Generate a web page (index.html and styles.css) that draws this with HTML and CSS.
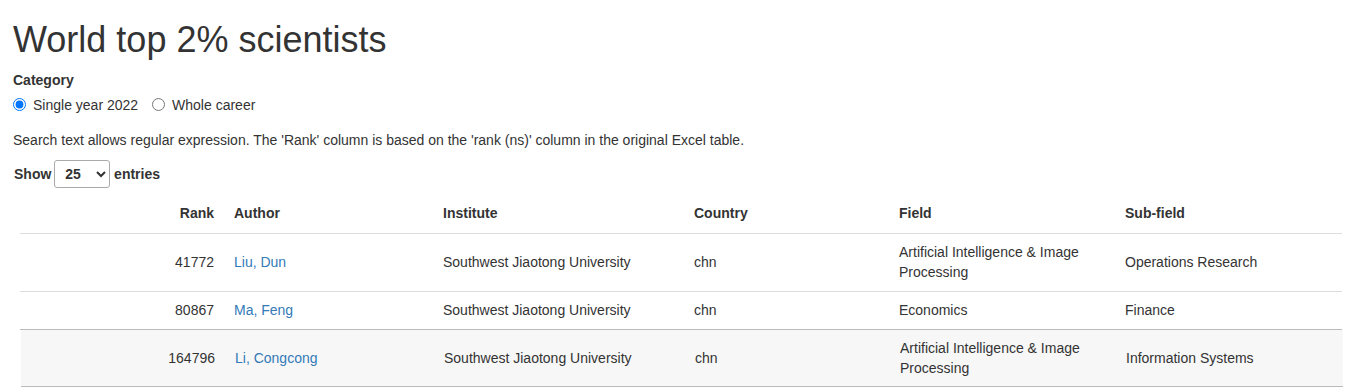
FILE: index.html
```html
<!DOCTYPE html>
<html lang="en">
<head>
<meta charset="utf-8">
<title>World top 2% scientists</title>
<link rel="stylesheet" href="styles.css">
</head>
<body>
<div class="page">
  <h1 class="title">World top 2% scientists</h1>
  <label class="group-label">Category</label>
  <div class="radios">
    <label class="radio"><input type="radio" name="cat" checked><span>Single year 2022</span></label>
    <label class="radio"><input type="radio" name="cat"><span>Whole career</span></label>
  </div>
  <p class="note">Search text allows regular expression. The 'Rank' column is based on the 'rank (ns)' column in the original Excel table.</p>
  <div class="length">
    <label class="length-label">Show
      <select class="length-select">
        <option>10</option>
        <option selected>25</option>
        <option>50</option>
        <option>100</option>
      </select>
      entries</label>
  </div>
  <div class="table-wrap">
    <table class="data">
      <colgroup>
        <col class="c-rank"><col class="c-author"><col class="c-inst"><col class="c-country"><col class="c-field"><col class="c-sub">
      </colgroup>
      <thead>
        <tr>
          <th class="num">Rank</th>
          <th>Author</th>
          <th>Institute</th>
          <th>Country</th>
          <th>Field</th>
          <th>Sub-field</th>
        </tr>
      </thead>
      <tbody>
        <tr>
          <td class="num">41772</td>
          <td><a href="#">Liu, Dun</a></td>
          <td>Southwest Jiaotong University</td>
          <td>chn</td>
          <td>Artificial Intelligence &amp; Image Processing</td>
          <td>Operations Research</td>
        </tr>
        <tr class="last">
          <td class="num">80867</td>
          <td><a href="#">Ma, Feng</a></td>
          <td>Southwest Jiaotong University</td>
          <td>chn</td>
          <td>Economics</td>
          <td>Finance</td>
        </tr>
      </tbody>
    </table>
    <table class="data extra">
      <colgroup>
        <col class="c-rank"><col class="c-author"><col class="c-inst"><col class="c-country"><col class="c-field"><col class="c-sub">
      </colgroup>
      <tbody>
        <tr>
          <td class="num">164796</td>
          <td><a href="#">Li, Congcong</a></td>
          <td>Southwest Jiaotong University</td>
          <td>chn</td>
          <td>Artificial Intelligence &amp; Image Processing</td>
          <td>Information Systems</td>
        </tr>
      </tbody>
    </table>
  </div>
</div>
</body>
</html>
```
FILE: styles.css
```css
html, body {
  margin: 0;
  padding: 0;
  background: #fff;
}
body {
  font-family: "Liberation Sans", Arial, Helvetica, sans-serif;
  font-size: 14px;
  line-height: 20px;
  color: #333;
}
.page {
  padding: 0 13px;
}
.title {
  font-size: 36px;
  font-weight: 500;
  line-height: 1.1;
  margin: 20px 0 10px;
  color: #333;
}
.group-label {
  display: block;
  font-weight: bold;
  margin-bottom: 5px;
}
.radios {
  display: flex;
  gap: 14px;
  height: 20px;
}
.radio {
  display: flex;
  align-items: center;
  gap: 7px;
}
.radio input {
  margin: 0;
  width: 13px;
  height: 13px;
}
.note {
  margin: 15px 0 10px;
}
.length {
  height: 28px;
  display: flex;
  align-items: center;
  padding-left: 1px;
}
.length-label {
  font-weight: bold;
}
.length-select {
  font: inherit;
  color: #333;
  width: 56px;
  height: 28px;
  margin: 0 0 0 -1px;
  padding: 0 0 0 6px;
  border: 1px solid #aaa;
  border-radius: 3px;
  background: #fff;
}
.table-wrap {
  margin-top: 5px;
  padding-left: 7px;
}
.data {
  width: 1322px;
  table-layout: fixed;
  border-collapse: collapse;
}
.c-rank { width: 204px; }
.c-author { width: 209px; }
.c-inst { width: 251px; }
.c-country { width: 205px; }
.c-field { width: 226px; }
.c-sub { width: 227px; }
.data th {
  text-align: left;
  font-weight: bold;
  padding: 10px 10px;
  border-bottom: 1px solid #ddd;
}
.data td {
  padding: 8px 10px 9px;
  border-bottom: 1px solid #ddd;
  vertical-align: middle;
}
.data .num {
  text-align: right;
}
.data tr.last td {
  border-bottom-color: #bbb;
}
.data a {
  color: #337ab7;
  text-decoration: none;
}
.extra {
  margin-left: 1px;
}
.extra td {
  background: #f7f7f7;
  padding-bottom: 8px;
  border-bottom: 1px solid #bbb;
}
```
